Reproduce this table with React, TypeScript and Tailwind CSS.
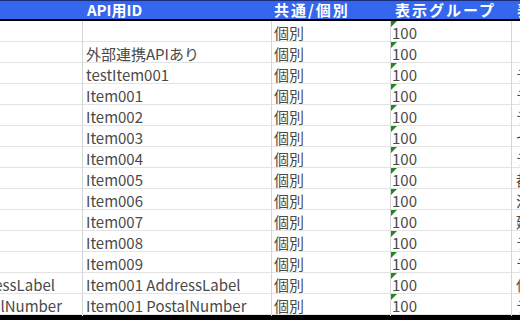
import React from "react"

type Row = {
	lead?: string
	leadPad?: string
	apiId: string
	scope: string
	group: string
	next: string
}

const rows: Row[] = [
	{ apiId: "", scope: "個別", group: "100", next: "" },
	{ apiId: "外部連携APIあり", scope: "個別", group: "100", next: "" },
	{ apiId: "testItem001", scope: "個別", group: "100", next: "テ" },
	{ apiId: "Item001", scope: "個別", group: "100", next: "テ" },
	{ apiId: "Item002", scope: "個別", group: "100", next: "テ" },
	{ apiId: "Item003", scope: "個別", group: "100", next: "セ" },
	{ apiId: "Item004", scope: "個別", group: "100", next: "テ" },
	{ apiId: "Item005", scope: "個別", group: "100", next: "都" },
	{ apiId: "Item006", scope: "個別", group: "100", next: "活" },
	{ apiId: "Item007", scope: "個別", group: "100", next: "建" },
	{ apiId: "Item008", scope: "個別", group: "100", next: "テ" },
	{ apiId: "Item009", scope: "個別", group: "100", next: "テ" },
	{
		lead: "Item001 AddressLabel",
		leadPad: "pr-[27px]",
		apiId: "Item001 AddressLabel",
		scope: "個別",
		group: "100",
		next: "住",
	},
	{
		lead: "Item001 PostalNumber",
		leadPad: "pr-[20px]",
		apiId: "Item001 PostalNumber",
		scope: "個別",
		group: "100",
		next: "テ",
	},
]

const grid = "grid grid-cols-[83px_189px_119px_121px_1fr]"

function GreenFlag() {
	return (
		<svg
			width="6"
			height="6"
			viewBox="0 0 6 6"
			className="absolute left-0 top-0"
		>
			<polygon points="0,0 6,0 0,6" fill="#1e8a1e" />
		</svg>
	)
}

export default function App() {
	return (
		<div
			className="w-[520px] h-[320px] overflow-hidden bg-white text-[#4a4a4a]"
			style={{ fontFamily: '"Noto Sans CJK JP", "Noto Sans", sans-serif' }}
		>
			<div
				className={`${grid} h-[21px] bg-[#3566ee] border-t border-[#1b2d7a] border-b-2 border-b-black text-white font-bold text-[15px] leading-[18px]`}
			>
				<div />
				<div className="pl-[4px] whitespace-nowrap">API用ID</div>
				<div className="pl-[2px] whitespace-nowrap tracking-[2px]">共通/個別</div>
				<div className="pl-[4px] whitespace-nowrap tracking-[2px]">表示グループ</div>
				<div className="pl-[5px] whitespace-nowrap overflow-hidden">表示</div>
			</div>
			{rows.map((r, i) => (
				<div
					key={i}
					className={`${grid} h-[21px] border-b border-[#e3e3e3] text-[15px] leading-[21px]`}
				>
					<div className="border-r border-[#d6d6d6] overflow-hidden flex justify-end pt-[1px]">
						{r.lead && (
							<span className={`whitespace-nowrap ${r.leadPad}`}>
								{r.lead}
							</span>
						)}
					</div>
					<div className="border-r border-[#d6d6d6] pl-[3px] pt-[1px] whitespace-nowrap overflow-hidden">
						{r.apiId}
					</div>
					<div className="border-r border-[#d6d6d6] pl-[2px] pt-[1px] whitespace-nowrap">
						{r.scope}
					</div>
					<div className="relative border-r border-[#d6d6d6] pl-[1px] pt-[1px] whitespace-nowrap">
						<GreenFlag />
						{r.group}
					</div>
					<div className="pl-[4px] pt-[1px] whitespace-nowrap overflow-hidden">
						{r.next}
					</div>
				</div>
			))}
			<div className="h-[6px] bg-black" />
		</div>
	)
}
